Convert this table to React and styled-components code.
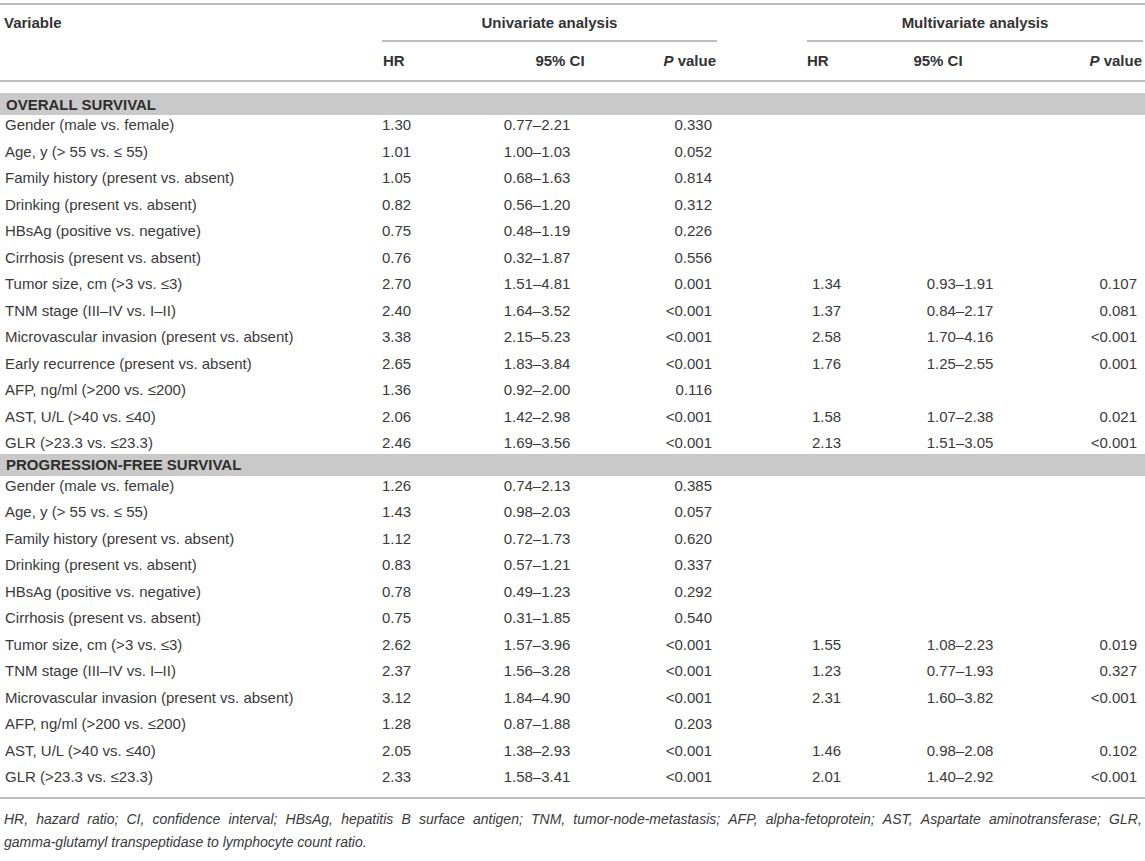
import React from 'react';
import styled, { createGlobalStyle } from 'styled-components';

const Global = createGlobalStyle`
  html, body { margin: 0; padding: 0; background: #ffffff; }
  body { font-family: "Liberation Sans", Arial, Helvetica, sans-serif; color: #333333; }
`;

const COLS = '382px 78px 160px 97px 90px 73px 160px 103px';
const RULE = '#bdbdbd';

const Table = styled.div`
  width: 1145px;
  padding-top: 3px;
  box-sizing: border-box;
`;

const Rule = styled.div`
  height: 2px;
  background: ${RULE};
  margin-top: ${p => p.$mt || 0}px;
`;

const GroupRow = styled.div`
  display: grid;
  grid-template-columns: 382px 335px 90px 336px;
  height: 37px;
`;

const HeadCell = styled.div`
  font-weight: bold;
  font-size: 15px;
  line-height: 16px;
  color: #333;
  padding-top: 10px;
  padding-left: ${p => p.$pl || 0}px;
  padding-right: ${p => p.$pr || 0}px;
  text-align: ${p => p.$align || 'left'};
  box-sizing: border-box;
  border-bottom: ${p => (p.$rule ? `2px solid ${RULE}` : 'none')};
  height: ${p => (p.$rule ? '37px' : 'auto')};
`;

const SubRow = styled.div`
  display: grid;
  grid-template-columns: ${COLS};
  height: 38px;
  align-items: center;
`;

const SubCell = styled.div`
  font-weight: bold;
  font-size: 15px;
  line-height: 16px;
  color: #333;
  text-align: ${p => p.$align || 'left'};
  padding-left: ${p => p.$pl || 0}px;
  padding-right: ${p => p.$pr || 0}px;
  em { font-style: italic; }
`;

const Bar = styled.div`
  height: 22px;
  background: #c9c9c9;
  margin: ${p => p.$mt ?? -3}px 0 -3px;
  display: flex;
  align-items: center;
  padding-left: 6px;
  font-weight: bold;
  font-size: 15px;
  color: #2e2e2e;
  position: relative;
`;

const Row = styled.div`
  display: grid;
  grid-template-columns: ${COLS};
  height: 26.5px;
  align-items: center;
  font-size: 15px;
  line-height: 16px;
  color: #3a3a3a;
`;

const Cell = styled.div`
  text-align: ${p => p.$align || 'left'};
  padding-left: ${p => p.$pl || 0}px;
  padding-right: ${p => p.$pr || 0}px;
  white-space: nowrap;
`;

const Footnote = styled.div`
  padding: 9px 3px 0 4px;
  font-style: italic;
  font-size: 14px;
  line-height: 23px;
  color: #3a3a3a;
`;

const JustLine = styled.div`
  white-space: nowrap;
  display: flex;
  justify-content: space-between;
`;

const Line = styled.div``;

const os = [
  ['Gender (male vs. female)', '1.30', '0.77–2.21', '0.330'],
  ['Age, y (> 55 vs. ≤ 55)', '1.01', '1.00–1.03', '0.052'],
  ['Family history (present vs. absent)', '1.05', '0.68–1.63', '0.814'],
  ['Drinking (present vs. absent)', '0.82', '0.56–1.20', '0.312'],
  ['HBsAg (positive vs. negative)', '0.75', '0.48–1.19', '0.226'],
  ['Cirrhosis (present vs. absent)', '0.76', '0.32–1.87', '0.556'],
  ['Tumor size, cm (>3 vs. ≤3)', '2.70', '1.51–4.81', '0.001', '1.34', '0.93–1.91', '0.107'],
  ['TNM stage (III–IV vs. I–II)', '2.40', '1.64–3.52', '<0.001', '1.37', '0.84–2.17', '0.081'],
  ['Microvascular invasion (present vs. absent)', '3.38', '2.15–5.23', '<0.001', '2.58', '1.70–4.16', '<0.001'],
  ['Early recurrence (present vs. absent)', '2.65', '1.83–3.84', '<0.001', '1.76', '1.25–2.55', '0.001'],
  ['AFP, ng/ml (>200 vs. ≤200)', '1.36', '0.92–2.00', '0.116'],
  ['AST, U/L (>40 vs. ≤40)', '2.06', '1.42–2.98', '<0.001', '1.58', '1.07–2.38', '0.021'],
  ['GLR (>23.3 vs. ≤23.3)', '2.46', '1.69–3.56', '<0.001', '2.13', '1.51–3.05', '<0.001'],
];

const pfs = [
  ['Gender (male vs. female)', '1.26', '0.74–2.13', '0.385'],
  ['Age, y (> 55 vs. ≤ 55)', '1.43', '0.98–2.03', '0.057'],
  ['Family history (present vs. absent)', '1.12', '0.72–1.73', '0.620'],
  ['Drinking (present vs. absent)', '0.83', '0.57–1.21', '0.337'],
  ['HBsAg (positive vs. negative)', '0.78', '0.49–1.23', '0.292'],
  ['Cirrhosis (present vs. absent)', '0.75', '0.31–1.85', '0.540'],
  ['Tumor size, cm (>3 vs. ≤3)', '2.62', '1.57–3.96', '<0.001', '1.55', '1.08–2.23', '0.019'],
  ['TNM stage (III–IV vs. I–II)', '2.37', '1.56–3.28', '<0.001', '1.23', '0.77–1.93', '0.327'],
  ['Microvascular invasion (present vs. absent)', '3.12', '1.84–4.90', '<0.001', '2.31', '1.60–3.82', '<0.001'],
  ['AFP, ng/ml (>200 vs. ≤200)', '1.28', '0.87–1.88', '0.203'],
  ['AST, U/L (>40 vs. ≤40)', '2.05', '1.38–2.93', '<0.001', '1.46', '0.98–2.08', '0.102'],
  ['GLR (>23.3 vs. ≤23.3)', '2.33', '1.58–3.41', '<0.001', '2.01', '1.40–2.92', '<0.001'],
];

function DataRow({ r }) {
  const [v, hr1, ci1, p1, hr2, ci2, p2] = r;
  return (
    <Row>
      <Cell $pl={5}>{v}</Cell>
      <Cell $pl={0}>{hr1}</Cell>
      <Cell $align="center" $pr={6}>{ci1}</Cell>
      <Cell $align="right" $pr={5}>{p1}</Cell>
      <Cell />
      <Cell $pl={5}>{hr2 || ''}</Cell>
      <Cell $align="center">{ci2 || ''}</Cell>
      <Cell $align="right" $pr={6}>{p2 || ''}</Cell>
    </Row>
  );
}

const words1 = 'HR, hazard ratio; CI, confidence interval; HBsAg, hepatitis B surface antigen; TNM, tumor-node-metastasis; AFP, alpha-fetoprotein; AST, Aspartate aminotransferase; GLR,'.split(' ');

export default function App() {
  return (
    <>
      <Global />
      <Table>
        <Rule />
        <GroupRow>
          <HeadCell $pl={4}>Variable</HeadCell>
          <HeadCell $align="center" $rule>Univariate analysis</HeadCell>
          <div />
          <HeadCell $align="center" $rule>Multivariate analysis</HeadCell>
        </GroupRow>
        <SubRow>
          <div />
          <SubCell $pl={1}>HR</SubCell>
          <SubCell $align="center" $pl={40}>95% CI</SubCell>
          <SubCell $align="right" $pr={1}>
            <em>P</em> value
          </SubCell>
          <div />
          <SubCell>HR</SubCell>
          <SubCell $align="center" $pr={44}>95% CI</SubCell>
          <SubCell $align="right" $pr={1}>
            <em>P</em> value
          </SubCell>
        </SubRow>
        <Rule />
        <Bar $mt={11}>OVERALL SURVIVAL</Bar>
        {os.map((r, i) => (
          <DataRow key={'o' + i} r={r} />
        ))}
        <Bar>PROGRESSION-FREE SURVIVAL</Bar>
        {pfs.map((r, i) => (
          <DataRow key={'p' + i} r={r} />
        ))}
        <Rule $mt={6} />
        <Footnote>
          <JustLine>
            {words1.map((w, i) => (
              <span key={i}>{w}</span>
            ))}
          </JustLine>
          <Line>gamma-glutamyl transpeptidase to lymphocyte count ratio.</Line>
        </Footnote>
      </Table>
    </>
  );
}
